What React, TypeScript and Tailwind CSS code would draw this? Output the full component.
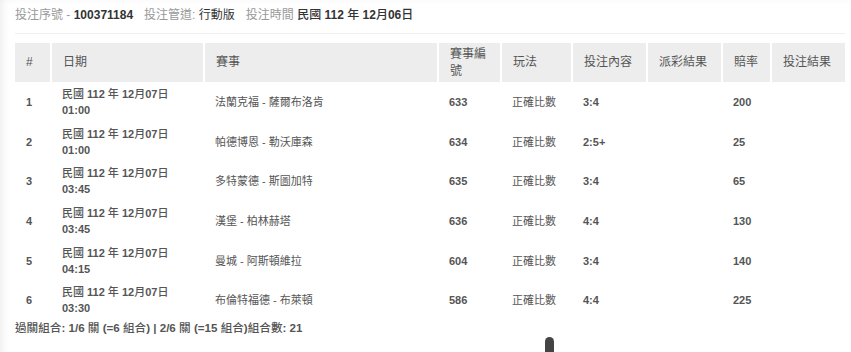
import React from "react";

const rows = [
  { no: 1, date: "民國 112 年 12月07日", time: "01:00", match: "法蘭克福 - 薩爾布洛肯", id: "633", play: "正確比數", pick: "3:4", odds: "200" },
  { no: 2, date: "民國 112 年 12月07日", time: "01:00", match: "帕德博恩 - 勒沃庫森", id: "634", play: "正確比數", pick: "2:5+", odds: "25" },
  { no: 3, date: "民國 112 年 12月07日", time: "03:45", match: "多特蒙德 - 斯圖加特", id: "635", play: "正確比數", pick: "3:4", odds: "65" },
  { no: 4, date: "民國 112 年 12月07日", time: "03:45", match: "漢堡 - 柏林赫塔", id: "636", play: "正確比數", pick: "4:4", odds: "130" },
  { no: 5, date: "民國 112 年 12月07日", time: "04:15", match: "曼城 - 阿斯頓維拉", id: "604", play: "正確比數", pick: "3:4", odds: "140" },
  { no: 6, date: "民國 112 年 12月07日", time: "03:30", match: "布倫特福德 - 布萊頓", id: "586", play: "正確比數", pick: "4:4", odds: "225" },
];

const cols = [
  { label: "#", w: "w-[36px]" },
  { label: "日期", w: "w-[153px]" },
  { label: "賽事", w: "w-[234px]" },
  { label: "賽事編號", w: "w-[63px]" },
  { label: "玩法", w: "w-[71px]" },
  { label: "投注內容", w: "w-[75px]" },
  { label: "派彩結果", w: "w-[75px]" },
  { label: "賠率", w: "w-[49px]" },
  { label: "投注結果", w: "w-[74px]" },
];

// latin bits bold, CJK bits stay regular (like the original page renders)
const Mixed = ({ text }: { text: string }) => {
  const parts = text.split(/([\u3400-\u9fff]+)/).filter(Boolean);
  return (
    <>
      {parts.map((p, i) =>
        /[\u3400-\u9fff]/.test(p) ? (
          <span key={i} className="font-medium">{p}</span>
        ) : (
          <span key={i} className="font-bold">{p}</span>
        )
      )}
    </>
  );
};

const App = () => {
  return (
    <div
      className="relative min-h-[352px] bg-white px-[15px] pt-[7px] text-[11px] text-[#555] shadow-[inset_7px_2px_8px_-5px_rgba(0,0,0,0.08)]"
      style={{ fontFamily: '"Liberation Sans", "Noto Sans CJK TC", sans-serif' }}
    >
      <div className="text-[12px] leading-[16px] whitespace-nowrap">
        <span className="text-[#999]">投注序號</span>
        <span className="text-[#999]"> - </span>
        <span className="font-bold text-[#333]">100371184</span>
        <span className="ml-[11px] text-[#999]">投注管道: </span>
        <span className="text-[#333]">行動版</span>
        <span className="ml-[11px] text-[#999]">投注時間 </span>
        <span className="text-[#333]">
          <Mixed text="民國 112 年 12月06日" />
        </span>
      </div>
      <div className="mt-[10px] h-px w-[830px] bg-[#eee]"></div>

      <table className="mt-[9px] w-[830px] table-fixed border-collapse">
        <thead>
          <tr className="h-[39px] bg-[#ededed]">
            {cols.map((c, i) => (
              <th
                key={c.label}
                className={`${c.w} ${i < cols.length - 1 ? "border-r-2 border-white" : ""} px-[11px] py-[2px] text-left align-middle text-[12px] font-normal leading-[17px] text-[#555]`}
              >
                {c.label}
              </th>
            ))}
          </tr>
        </thead>
        <tbody>
          {rows.map((r) => (
            <tr key={r.no} className="h-[39.7px]">
              <td className="px-[11px] font-bold leading-[16px]">{r.no}</td>
              <td className="px-[11px] leading-[16px]">
                <Mixed text={r.date} />
                <br />
                <span className="font-bold">{r.time}</span>
              </td>
              <td className="px-[11px] leading-[16px]">{r.match}</td>
              <td className="px-[11px] font-bold leading-[16px]">{r.id}</td>
              <td className="px-[11px] leading-[16px]">{r.play}</td>
              <td className="px-[11px] font-bold leading-[16px]">{r.pick}</td>
              <td className="px-[11px]"></td>
              <td className="px-[11px] font-bold leading-[16px]">{r.odds}</td>
              <td className="px-[11px]"></td>
            </tr>
          ))}
        </tbody>
      </table>

      <div className="text-[11.6px] leading-[16px]">
        <Mixed text="過關組合: 1/6 關 (=6 組合) | 2/6 關 (=15 組合)組合數: 21" />
      </div>

      <div className="absolute left-[545px] top-[337px] h-[15px] w-[9px] rounded-t-full bg-[#444]"></div>
    </div>
  );
};

export default App;
